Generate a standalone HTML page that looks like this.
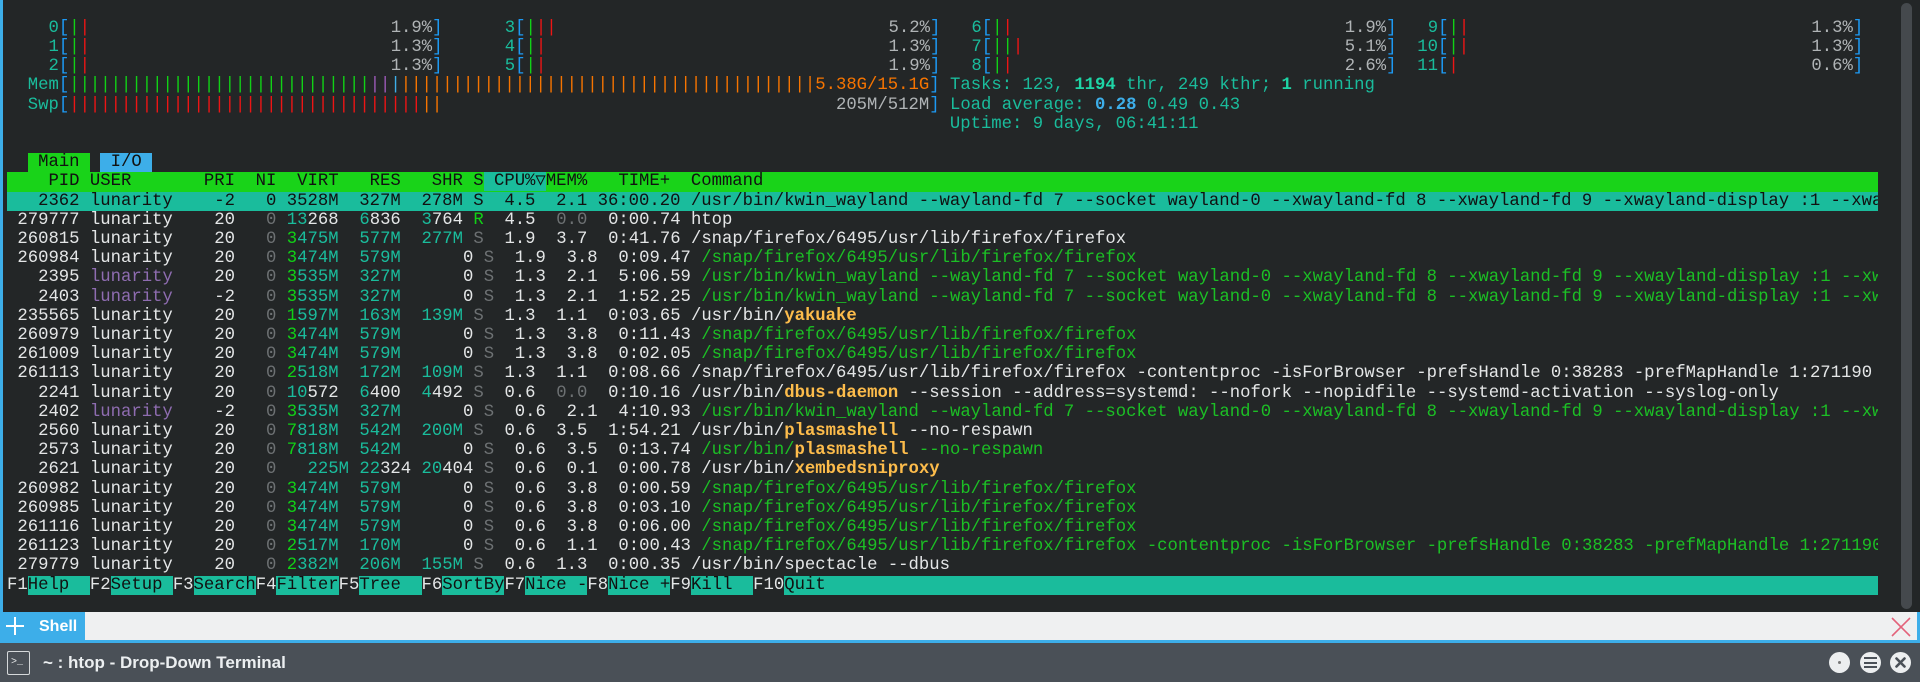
<!DOCTYPE html>
<html><head><meta charset="utf-8"><style>
*{margin:0;padding:0;box-sizing:border-box}
html,body{width:1920px;height:682px;overflow:hidden;background:#232627}
#term{position:absolute;left:0;top:0;width:1920px;height:612px;background:#232627;border-left:3px solid #3daee9}
.ln{position:absolute;left:7px;height:19.2px;line-height:19.2px;white-space:pre;font-family:"Liberation Mono",monospace;font-size:17.28px;color:#e4e6e7;width:1871px;overflow:hidden;margin-top:2px}
.a{position:absolute;top:0}
.t{color:#1abc9c}.b{color:#1d99f3}.G{color:#11d116}.r{color:#ed1515}.pc{color:#b0b4b6}
.o{color:#f67400}.pu{color:#9b59b6}.bl{color:#3daee9}
.g{color:#6d7173}.tl{color:#1abc9c}.c{color:#1cbf25}.y{color:#fdbc4b;font-weight:bold}.p{color:#8e6cb0}
.bt{font-weight:bold;color:#1ed5a6}
.hdr{background:#19d319;color:#111}
.sel{background:#1abc9c;color:#111}
.fk{color:#e4e6e7}.fl{background:#1abc9c;color:#111}
</style></head><body>
<div id="term">
<div style="position:absolute;left:1898px;top:3px;width:11px;height:606px;border-radius:6px;background:#45494d"></div>
</div>
<div class="ln" style="top:16.8px">
<span class="a" style="left:41.5px"><span class="t">0</span><span class="b">[</span><span class="G">|</span><span class="r">|</span></span>
<span class="a pc" style="left:383.7px">1.9%<span class="b">]</span></span>
<span class="a" style="left:497.8px"><span class="t">3</span><span class="b">[</span><span class="G">|</span><span class="r">||</span></span>
<span class="a pc" style="left:881.5px">5.2%<span class="b">]</span></span>
<span class="a" style="left:964.4px"><span class="t">6</span><span class="b">[</span><span class="G">|</span><span class="r">|</span></span>
<span class="a pc" style="left:1337.7px">1.9%<span class="b">]</span></span>
<span class="a" style="left:1420.7px"><span class="t">9</span><span class="b">[</span><span class="G">|</span><span class="r">|</span></span>
<span class="a pc" style="left:1804.4px">1.3%<span class="b">]</span></span>
</div>
<div class="ln" style="top:36px">
<span class="a" style="left:41.5px"><span class="t">1</span><span class="b">[</span><span class="G">|</span><span class="r">|</span></span>
<span class="a pc" style="left:383.7px">1.3%<span class="b">]</span></span>
<span class="a" style="left:497.8px"><span class="t">4</span><span class="b">[</span><span class="G">|</span><span class="r">|</span></span>
<span class="a pc" style="left:881.5px">1.3%<span class="b">]</span></span>
<span class="a" style="left:964.4px"><span class="t">7</span><span class="b">[</span><span class="G">||</span><span class="r">|</span></span>
<span class="a pc" style="left:1337.7px">5.1%<span class="b">]</span></span>
<span class="a" style="left:1410.3px"><span class="t">10</span><span class="b">[</span><span class="G">|</span><span class="r">|</span></span>
<span class="a pc" style="left:1804.4px">1.3%<span class="b">]</span></span>
</div>
<div class="ln" style="top:55.2px">
<span class="a" style="left:41.5px"><span class="t">2</span><span class="b">[</span><span class="G">|</span><span class="r">|</span></span>
<span class="a pc" style="left:383.7px">1.3%<span class="b">]</span></span>
<span class="a" style="left:497.8px"><span class="t">5</span><span class="b">[</span><span class="G">|</span><span class="r">|</span></span>
<span class="a pc" style="left:881.5px">1.9%<span class="b">]</span></span>
<span class="a" style="left:964.4px"><span class="t">8</span><span class="b">[</span><span class="G">|</span><span class="r">|</span></span>
<span class="a pc" style="left:1337.7px">2.6%<span class="b">]</span></span>
<span class="a" style="left:1410.3px"><span class="t">11</span><span class="b">[</span><span class="r">|</span></span>
<span class="a pc" style="left:1804.4px">0.6%<span class="b">]</span></span>
</div>
<div class="ln" style="top:74.4px">  <span class="t">Mem</span><span class="b">[</span><span class="G">|||||||||||||||||||||||||||||</span><span class="pu">||</span><span class="bl">|</span><span class="o">||||||||||||||||||||||||||||||||||||||||5.38G/15.1G</span><span class="b">]</span> <span class="t">Tasks: 123, </span><span class="bt">1194</span><span class="t"> thr, 249 kthr; </span><span class="bt">1</span><span class="t"> running</span></div>
<div class="ln" style="top:93.6px">  <span class="t">Swp</span><span class="b">[</span><span class="r">||||||||||||||||||||||||||||||||||</span><span class="o">||</span>                                      <span class="pc">205M/512M</span><span class="b">]</span> <span class="t">Load average: </span><span class="bl" style="font-weight:bold">0.28</span><span class="t"> 0.49 0.43</span></div>
<div class="ln" style="top:112.8px">                                                                                           <span class="t">Uptime: 9 days, 06:41:11</span></div>
<div class="ln" style="top:151.2px">  <span style="background:#19d319;color:#111"> Main </span> <span style="background:#3daee9;color:#111"> I/O </span></div>
<div class="ln hdr" style="top:170.4px">    PID USER       PRI  NI  VIRT   RES   SHR S<span style="background:#1abc9c"> CPU%▽</span>MEM%   TIME+  Command                                                                                                                   </div>
<div class="ln sel" style="top:189.6px">   2362 lunarity    -2   0 3528M  327M  278M S  4.5  2.1 36:00.20 /usr/bin/kwin_wayland --wayland-fd 7 --socket wayland-0 --xwayland-fd 8 --xwayland-fd 9 --xwayland-display :1 --xwayland-xauthority</div>
<div class="ln" style="top:208.8px"> 279777 lunarity    20<span class="g">   0</span> <span class="tl">13</span>268  <span class="tl">6</span>836  <span class="tl">3</span>764 <span class="G">R</span>  4.5<span class="g">  0.0</span>  0:00.74 htop</div>
<div class="ln" style="top:228px"> 260815 lunarity    20<span class="g">   0</span> <span class="G">3</span><span class="tl">475M</span>  <span class="tl">577M</span>  <span class="tl">277M</span> <span class="g">S</span>  1.9  3.7  0:41.76 /snap/firefox/6495/usr/lib/firefox/firefox</div>
<div class="ln" style="top:247.2px"> 260984 lunarity    20<span class="g">   0</span> <span class="G">3</span><span class="tl">474M</span>  <span class="tl">579M</span>      0 <span class="g">S</span>  1.9  3.8  0:09.47 <span class="c">/snap/firefox/6495/usr/lib/firefox/firefox</span></div>
<div class="ln" style="top:266.4px">   2395 <span class="p">lunarity</span>    20<span class="g">   0</span> <span class="G">3</span><span class="tl">535M</span>  <span class="tl">327M</span>      0 <span class="g">S</span>  1.3  2.1  5:06.59 <span class="c">/usr/bin/kwin_wayland --wayland-fd 7 --socket wayland-0 --xwayland-fd 8 --xwayland-fd 9 --xwayland-display :1 --xwayland-xauthority</span></div>
<div class="ln" style="top:285.6px">   2403 <span class="p">lunarity</span>    -2<span class="g">   0</span> <span class="G">3</span><span class="tl">535M</span>  <span class="tl">327M</span>      0 <span class="g">S</span>  1.3  2.1  1:52.25 <span class="c">/usr/bin/kwin_wayland --wayland-fd 7 --socket wayland-0 --xwayland-fd 8 --xwayland-fd 9 --xwayland-display :1 --xwayland-xauthority</span></div>
<div class="ln" style="top:304.8px"> 235565 lunarity    20<span class="g">   0</span> <span class="G">1</span><span class="tl">597M</span>  <span class="tl">163M</span>  <span class="tl">139M</span> <span class="g">S</span>  1.3  1.1  0:03.65 /usr/bin/<span class="y">yakuake</span></div>
<div class="ln" style="top:324px"> 260979 lunarity    20<span class="g">   0</span> <span class="G">3</span><span class="tl">474M</span>  <span class="tl">579M</span>      0 <span class="g">S</span>  1.3  3.8  0:11.43 <span class="c">/snap/firefox/6495/usr/lib/firefox/firefox</span></div>
<div class="ln" style="top:343.2px"> 261009 lunarity    20<span class="g">   0</span> <span class="G">3</span><span class="tl">474M</span>  <span class="tl">579M</span>      0 <span class="g">S</span>  1.3  3.8  0:02.05 <span class="c">/snap/firefox/6495/usr/lib/firefox/firefox</span></div>
<div class="ln" style="top:362.4px"> 261113 lunarity    20<span class="g">   0</span> <span class="G">2</span><span class="tl">518M</span>  <span class="tl">172M</span>  <span class="tl">109M</span> <span class="g">S</span>  1.3  1.1  0:08.66 /snap/firefox/6495/usr/lib/firefox/firefox -contentproc -isForBrowser -prefsHandle 0:38283 -prefMapHandle 1:271190 -jsInitHandle</div>
<div class="ln" style="top:381.6px">   2241 lunarity    20<span class="g">   0</span> <span class="tl">10</span>572  <span class="tl">6</span>400  <span class="tl">4</span>492 <span class="g">S</span>  0.6<span class="g">  0.0</span>  0:10.16 /usr/bin/<span class="y">dbus-daemon</span> --session --address=systemd: --nofork --nopidfile --systemd-activation --syslog-only</div>
<div class="ln" style="top:400.8px">   2402 <span class="p">lunarity</span>    -2<span class="g">   0</span> <span class="G">3</span><span class="tl">535M</span>  <span class="tl">327M</span>      0 <span class="g">S</span>  0.6  2.1  4:10.93 <span class="c">/usr/bin/kwin_wayland --wayland-fd 7 --socket wayland-0 --xwayland-fd 8 --xwayland-fd 9 --xwayland-display :1 --xwayland-xauthority</span></div>
<div class="ln" style="top:420px">   2560 lunarity    20<span class="g">   0</span> <span class="G">7</span><span class="tl">818M</span>  <span class="tl">542M</span>  <span class="tl">200M</span> <span class="g">S</span>  0.6  3.5  1:54.21 /usr/bin/<span class="y">plasmashell</span> --no-respawn</div>
<div class="ln" style="top:439.2px">   2573 lunarity    20<span class="g">   0</span> <span class="G">7</span><span class="tl">818M</span>  <span class="tl">542M</span>      0 <span class="g">S</span>  0.6  3.5  0:13.74 <span class="c">/usr/bin/</span><span class="y">plasmashell</span><span class="c"> --no-respawn</span></div>
<div class="ln" style="top:458.4px">   2621 lunarity    20<span class="g">   0</span>   <span class="tl">225M</span> <span class="tl">22</span>324 <span class="tl">20</span>404 <span class="g">S</span>  0.6  0.1  0:00.78 /usr/bin/<span class="y">xembedsniproxy</span></div>
<div class="ln" style="top:477.6px"> 260982 lunarity    20<span class="g">   0</span> <span class="G">3</span><span class="tl">474M</span>  <span class="tl">579M</span>      0 <span class="g">S</span>  0.6  3.8  0:00.59 <span class="c">/snap/firefox/6495/usr/lib/firefox/firefox</span></div>
<div class="ln" style="top:496.8px"> 260985 lunarity    20<span class="g">   0</span> <span class="G">3</span><span class="tl">474M</span>  <span class="tl">579M</span>      0 <span class="g">S</span>  0.6  3.8  0:03.10 <span class="c">/snap/firefox/6495/usr/lib/firefox/firefox</span></div>
<div class="ln" style="top:516px"> 261116 lunarity    20<span class="g">   0</span> <span class="G">3</span><span class="tl">474M</span>  <span class="tl">579M</span>      0 <span class="g">S</span>  0.6  3.8  0:06.00 <span class="c">/snap/firefox/6495/usr/lib/firefox/firefox</span></div>
<div class="ln" style="top:535.2px"> 261123 lunarity    20<span class="g">   0</span> <span class="G">2</span><span class="tl">517M</span>  <span class="tl">170M</span>      0 <span class="g">S</span>  0.6  1.1  0:00.43 <span class="c">/snap/firefox/6495/usr/lib/firefox/firefox -contentproc -isForBrowser -prefsHandle 0:38283 -prefMapHandle 1:271190 -jsInitHandle</span></div>
<div class="ln" style="top:554.4px"> 279779 lunarity    20<span class="g">   0</span> <span class="G">2</span><span class="tl">382M</span>  <span class="tl">206M</span>  <span class="tl">155M</span> <span class="g">S</span>  0.6  1.3  0:00.35 /usr/bin/spectacle --dbus</div>
<div class="ln" style="top:573.6px"><span class="fk">F1</span><span class="fl">Help  </span><span class="fk">F2</span><span class="fl">Setup </span><span class="fk">F3</span><span class="fl">Search</span><span class="fk">F4</span><span class="fl">Filter</span><span class="fk">F5</span><span class="fl">Tree  </span><span class="fk">F6</span><span class="fl">SortBy</span><span class="fk">F7</span><span class="fl">Nice -</span><span class="fk">F8</span><span class="fl">Nice +</span><span class="fk">F9</span><span class="fl">Kill  </span><span class="fk">F10</span><span class="fl">Quit                                                                                                           </span></div>

<div style="position:absolute;left:0;top:612px;width:1920px;height:29px;background:#eff0f1;border-right:3px solid #3daee9;border-left:3px solid #3daee9"></div>
<div style="position:absolute;left:0;top:612px;width:85px;height:29px;background:#3daee9"></div>
<div style="position:absolute;left:6px;top:625px;width:18px;height:2px;background:#fff"></div>
<div style="position:absolute;left:14px;top:617px;width:2px;height:18px;background:#fff"></div>
<div style="position:absolute;left:39px;top:612px;height:29px;line-height:29px;font-family:'Liberation Sans',sans-serif;font-weight:bold;font-size:16px;color:#fff">Shell</div>
<svg style="position:absolute;left:1891px;top:617px" width="20" height="20" viewBox="0 0 20 20"><path d="M1 1L19 19M19 1L1 19" stroke="#e3627a" stroke-width="1.6"/></svg>
<div style="position:absolute;left:0;top:640px;width:1920px;height:3px;background:#3daee9"></div>
<div style="position:absolute;left:0;top:643px;width:1920px;height:39px;background:#4a5057"></div>
<div style="position:absolute;left:7px;top:651px;width:23px;height:24px;border:1.5px solid #d5d8da;border-radius:2px"></div>
<div style="position:absolute;left:11px;top:657px;font-family:'Liberation Mono',monospace;font-size:10px;color:#e5e7e8">&gt;_</div>
<div style="position:absolute;left:43px;top:650px;line-height:26px;font-family:'Liberation Sans',sans-serif;font-weight:bold;font-size:17px;color:#eceff1">~ : htop - Drop-Down Terminal</div>
<div style="position:absolute;left:1829px;top:652px;width:21px;height:21px;border-radius:50%;background:#eceeef"></div>
<div style="position:absolute;left:1838px;top:661px;width:3px;height:3px;border-radius:50%;background:#777"></div>
<div style="position:absolute;left:1860px;top:652px;width:21px;height:21px;border-radius:50%;background:#eceeef"></div>
<div style="position:absolute;left:1864px;top:657px;width:13px;height:11px;border-top:2.5px solid #4a5057;border-bottom:2.5px solid #4a5057"></div>
<div style="position:absolute;left:1864px;top:661.5px;width:13px;height:2.5px;background:#4a5057"></div>
<div style="position:absolute;left:1890px;top:652px;width:21px;height:21px;border-radius:50%;background:#eceeef"></div>
<svg style="position:absolute;left:1890px;top:652px" width="21" height="21" viewBox="0 0 21 21"><path d="M6.5 6.5L14.5 14.5M14.5 6.5L6.5 14.5" stroke="#4a5057" stroke-width="2.6" stroke-linecap="round"/></svg>
</body></html>
